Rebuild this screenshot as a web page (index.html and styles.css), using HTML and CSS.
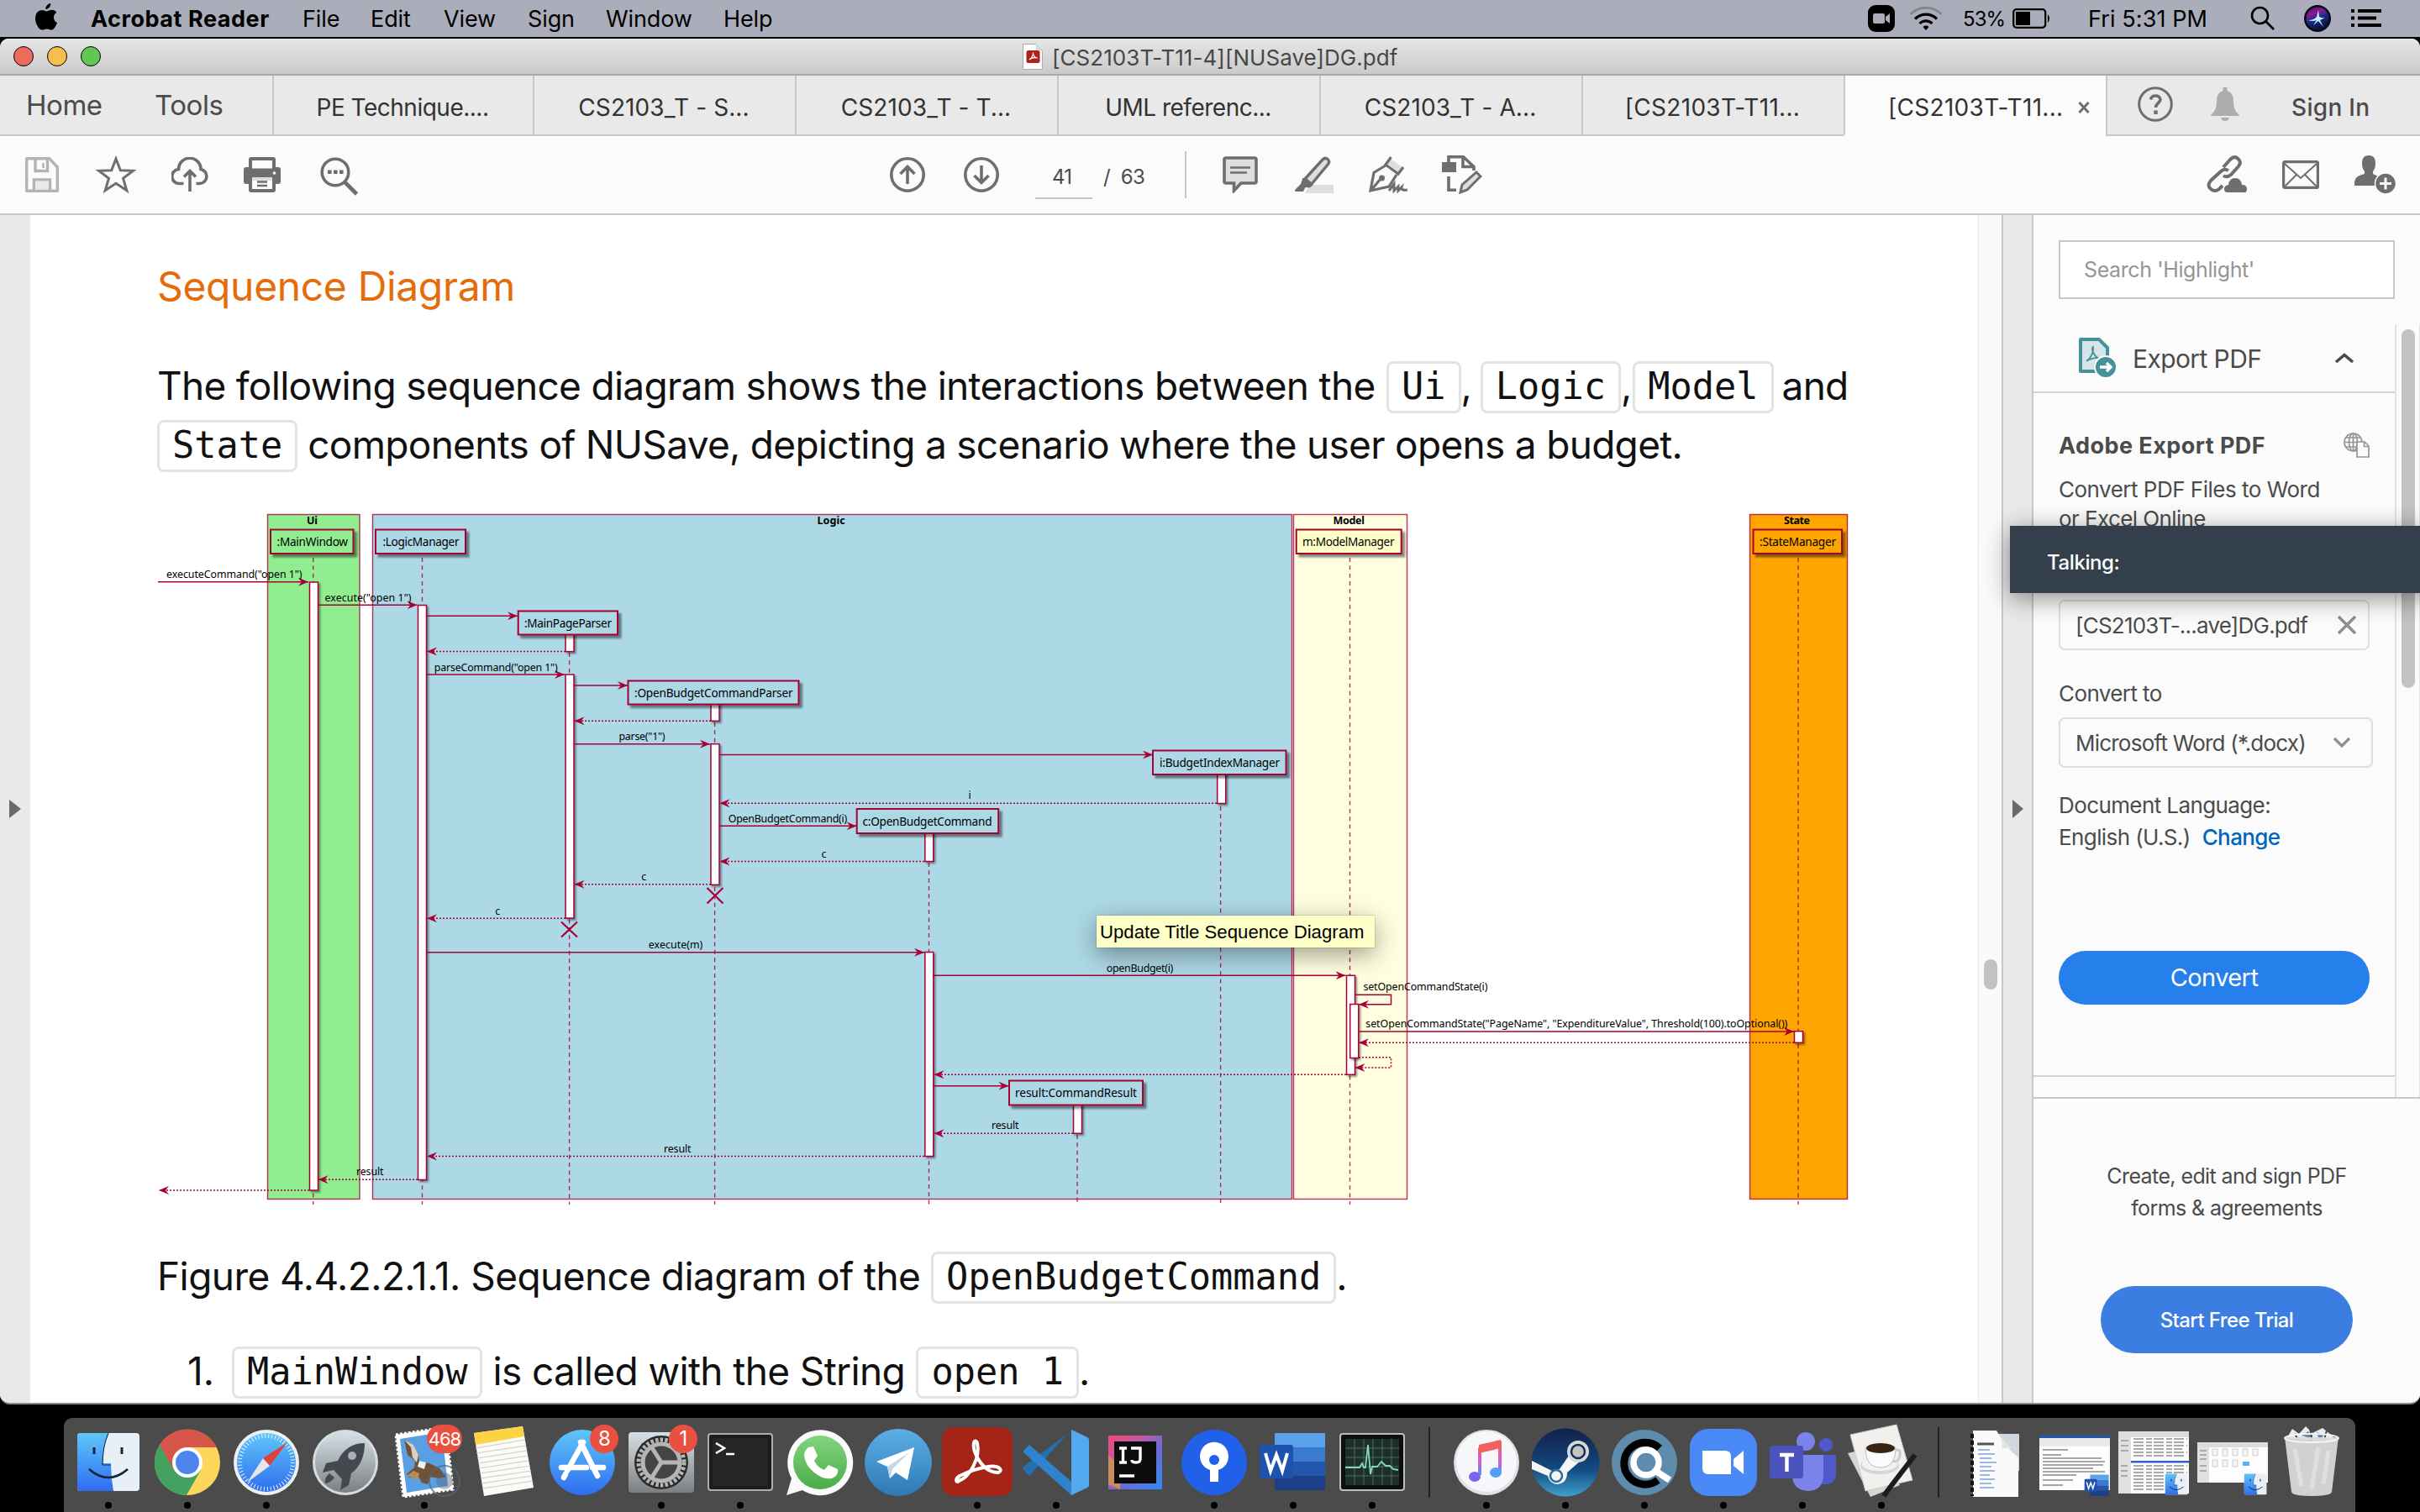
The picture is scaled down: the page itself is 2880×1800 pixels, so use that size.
FILE: index.html
```html
<!DOCTYPE html>
<html lang="en">
<head>
<meta charset="utf-8">
<title>[CS2103T-T11-4][NUSave]DG.pdf</title>
<link rel="stylesheet" href="styles.css">
</head>
<body>
<div class="desktop">
  <header class="menubar">
    <svg class="apple" width="26" height="32" viewBox="0 0 26 32"><path d="M18.3 0c.3 3.600-2.700 7-6 7C11.900 3.700 15 .4 18.300 0zM25.300 11c-5 3-4 10 .7 12-1.400 4-4 8.700-7 8.700-2 0-2.800-1.200-5.300-1.200S10.200 31.700 8.300 31.700C4.200 31.700 0 24 0 18 0 11.500 3.900 8 8 8c2.300 0 4 1.400 5.600 1.400S17 7.800 19.700 7.800c2.300 0 4.400 1.200 5.600 3.200z"/></svg>
    <b class="mi app">Acrobat Reader</b><span class="mi file">File</span><span class="mi edit">Edit</span><span class="mi view">View</span><span class="mi sign">Sign</span><span class="mi wind">Window</span><span class="mi help">Help</span>
    <div class="status">
      <svg width="32" height="32" viewBox="0 0 32 32"><rect width="32" height="32" rx="9"/><rect x="6" y="10" width="14" height="12" rx="2" fill="#abaeba"/><path d="M21 14l5-4v12l-5-4z" fill="#abaeba"/></svg>
      <svg class="wifi" width="40" height="30" viewBox="0 0 40 30" fill="none" stroke="#000" stroke-width="3.200"><path d="M1.500 10a26 26 0 0 1 37 0" stroke="#85878f"/><path d="M7 15.500a18.500 18.500 0 0 1 26 0M12.500 21a10.500 10.500 0 0 1 15 0"/><path d="M20 29l-3.500-4a5 5 0 0 1 7 0z" fill="#000" stroke="none"/></svg>
      <span class="pct">53%</span>
      <svg class="batt" width="46" height="24" viewBox="0 0 46 24"><rect x="1.200" y="1.200" width="38" height="21.600" rx="3.500" fill="none" stroke="#000" stroke-width="2.200"/><rect x="4" y="4" width="17" height="16"/><path d="M42 7q4 5 0 10z"/></svg>
      <span class="clock">Fri 5:31 PM</span>
      <svg class="srch" width="30" height="30" viewBox="0 0 30 30" fill="none" stroke="#000" stroke-width="2.600"><circle cx="11.500" cy="11.500" r="9.500"/><path d="M18.500 18.500l9.500 9.500"/></svg>
      <svg class="siri" width="32" height="32" viewBox="0 0 32 32"><defs><linearGradient id="sr" x1="0" y1="0" x2=".4" y2="1"><stop offset="0" stop-color="#3a1a5c"/><stop offset=".35" stop-color="#8d1a8f"/><stop offset=".6" stop-color="#1b2b8a"/><stop offset="1" stop-color="#0a1440"/></linearGradient></defs><circle cx="16" cy="16" r="16" fill="#07071a"/><circle cx="16" cy="16" r="13.500" fill="url(#sr)"/><path d="M5 18q7 0 10-4l2-8 1 8q4 2 7 1-4 2-6 3l4 8-6-7-6 5 4-6q-5 2-10 0z" fill="#bff3ff"/></svg>
      <svg class="list" width="36" height="22" viewBox="0 0 36 22"><path d="M0 0h4v4H0zM8 0h28v4H8zM0 8.500h4v4H0zM8 8.500h22v4H8zM0 17h4v4H0zM8 17h28v4H8z"/></svg>
    </div>
  </header>

  <section class="window">
    <div class="titlebar">
      <div class="lights"><i class="red"></i><i class="yellow"></i><i class="green"></i></div>
      <svg class="docicon" width="24" height="31" viewBox="0 0 24 31"><path d="M.5.500h15l8 8v22H.500z" fill="#fff" stroke="#aaa"/><path d="M15.500.500v8h8z" fill="#ddd"/><rect x="4.500" y="8" width="16" height="15" rx="2.500" fill="#b1211b"/><path d="M8 19c3-2 5-6 4.500-8.500M12.500 12c.5 3 3 5 5 5-3-1-7 0-9.500 2" fill="none" stroke="#fff" stroke-width="1.300"/></svg>
      <span class="wtitle">[CS2103T-T11-4][NUSave]DG.pdf</span>
    </div>

    <nav class="tabs">
      <div class="hometools"><span class="home">Home</span><span class="tools">Tools</span></div>
      <div class="tab t1">PE Technique....</div>
      <div class="tab t2">CS2103_T - S...</div>
      <div class="tab t3">CS2103_T - T...</div>
      <div class="tab t4">UML referenc...</div>
      <div class="tab t5">CS2103_T - A...</div>
      <div class="tab t6">[CS2103T-T11...</div>
      <div class="tab active"><span>[CS2103T-T11...</span><svg width="14" height="14" viewBox="0 0 14 14"><path d="M1.500 1l11 12M12.500 1l-11 12" stroke="#6e6e6e" stroke-width="3"/></svg></div>
      <div class="account">
        <svg width="42" height="42" viewBox="0 0 42 42" fill="none" stroke="#6e6e6e"><circle cx="21" cy="21" r="19.300" stroke-width="3"/><path d="M15.500 15.500q1-4.500 5.800-4.500t5.700 4.500c0 4-5.500 4.500-5.500 9.500" stroke-width="3.600"/><path d="M19.300 28.500h4.400v4.400h-4.400z" fill="#6e6e6e" stroke="none"/></svg>
        <svg class="bell" width="34" height="40" viewBox="0 0 34 40" fill="#aeaeae"><path d="M14.500 0h5v4c6 2 7.500 7 7.500 12 0 9 2 12 7 17v1H0v-1c5-5 7-8 7-17 0-5 1.500-10 7.500-12zM12 36h10q-1 4-5 4t-5-4z"/></svg>
        <span class="signin">Sign In</span>
      </div>
    </nav>

    <div class="toolbar">
      <svg class="i1" width="40" height="42" viewBox="0 0 40 42" fill="none" stroke="#b3b3b3" stroke-width="3.400"><path d="M1.700 1.700h27L38.300 12v28.300H1.700z" stroke-linejoin="round"/><path d="M12 2v14.500h14.500V2M10.500 40V27h19v13" /><path d="M12.200 28.500h15.600v10H12.200z" fill="#e9e9e9" stroke="none"/><path d="M21.500 7v6" stroke-width="2.500"/></svg>
      <svg class="i2" width="48" height="46" viewBox="0 0 48 46"><path d="M24 4l5.300 13.800 15.200.5-12 9 4.300 14.500L24 33.300 11.200 41.800l4.300-14.500-12-9 15.200-.5z" fill="none" stroke="#6e6e6e" stroke-width="3"/></svg>
      <svg class="i3" width="44" height="42" viewBox="0 0 44 42" fill="none" stroke="#6e6e6e" stroke-width="3.600"><path d="M14.500 31.500H10a8.500 8.500 0 0 1-1.500-17 13 13 0 0 1 26.500 0 8.600 8.600 0 0 1-1 17h-4.500"/><path d="M22 41V17M15 23.500l7-7 7 7"/></svg>
      <svg class="i4" width="44" height="42" viewBox="0 0 44 42"><path d="M9 0h26q3 0 3 3v9h3q3 0 3 3v14q0 3-3 3h-3v7q0 3-3 3H9q-3 0-3-3v-7H3q-3 0-3-3V15q0-3 3-3h3V3q0-3 3-3z" fill="#6e6e6e"/><path d="M10 4h24v9.500H10zM10 24h24v14H10z" fill="#fbfbfb"/><path d="M10 24h24v4H10z" fill="#ddd"/><path d="M16 29.500h12M16 34h12" stroke="#6e6e6e" stroke-width="2.400"/><circle cx="36.500" cy="19" r="1.800" fill="#fbfbfb"/></svg>
      <svg class="i5" width="46" height="46" viewBox="0 0 46 46" fill="none" stroke="#6e6e6e"><circle cx="18" cy="18" r="15.800" stroke-width="3.600"/><path d="M29.500 30l14 14" stroke-width="4.600"/><path d="M9 15.500h4.600v4.600H9zM16 15.500h4.600v4.600H16zM23 15.500h4.600v4.600H23z" fill="#6e6e6e" stroke="none"/></svg>
      <svg class="i6" width="42" height="42" viewBox="0 0 42 42" fill="none" stroke="#6e6e6e" stroke-width="3.600"><circle cx="21" cy="21" r="19.200"/><path d="M21 32V12M12.500 20l8.500-8.500 8.500 8.500"/></svg>
      <svg class="i7" width="42" height="42" viewBox="0 0 42 42" fill="none" stroke="#6e6e6e" stroke-width="3.600"><circle cx="21" cy="21" r="19.200"/><path d="M21 10v20M12.500 22l8.500 8.500 8.500-8.500"/></svg>
      <div class="pageno">41</div>
      <div class="pages"><span>/</span><span class="total">63</span></div>
      <div class="vsep"></div>
      <svg class="i8" width="42" height="44" viewBox="0 0 42 44"><path d="M4 2h34q2 0 2 2v26q0 2-2 2H22l-8.500 9v-9H4q-2 0-2-2V4q0-2 2-2z" fill="#dedede" stroke="#6e6e6e" stroke-width="3.600"/><path d="M9 13.500h24M9 19.500h20" stroke="#6e6e6e" stroke-width="2.600"/></svg>
      <svg class="i9" width="46" height="44" viewBox="0 0 46 44"><path d="M18 34h28v10H12z" fill="#dedede"/><path d="M12 27L33 4q3-3 6-.5t.5 6L20 33z" fill="#dedede" stroke="#6e6e6e" stroke-width="3.400"/><path d="M9.500 25.500l12 9-4 3-5-.5L10 42H1q-2-1 0-3l6-6z" fill="#6e6e6e"/></svg>
      <svg class="i10" width="46" height="44" viewBox="0 0 46 44" fill="none" stroke="#6e6e6e" stroke-width="3.200"><path d="M26 3l15 11-5 6-15-13z" fill="#dedede" stroke="none"/><path d="M26.500 1L20 10l15 11 6-8M20 11L6 19.500 2 41l22-5 9-14"/><path d="M3 40l11-13"/><circle cx="15.500" cy="26" r="3.500" fill="#6e6e6e" stroke="none"/><path d="M24 41l6-8v8l5-5v5l4-4q-1 4 7 3" stroke-width="3"/></svg>
      <svg class="i11" width="48" height="46" viewBox="0 0 48 46" fill="none" stroke="#6e6e6e" stroke-width="3.600"><path d="M8 8V1.800h17.500L38 13.500V18M25 2v11.500h12M8 25v16.300h9"/><path d="M0 8h17v12H0z" fill="#6e6e6e" stroke="none"/><path d="M22 44l2-9 17-15 5 5-16 16z" fill="#dedede" stroke-width="3"/></svg>
      <svg class="i12" width="48" height="46" viewBox="0 0 48 46" fill="none" stroke="#6e6e6e" stroke-width="4"><path d="M20 14L28 5q5-5 9.500-1t.5 9l-9 10q-5 4-9 1"/><path d="M26 18q-5-3-9 1L5 30q-5 6 0 10t10 0l4-4"/><path d="M25 44q-4 0-4-4t5-5q1-8 8-8t8 8q6 0 6 5t-4 4z" fill="#6e6e6e" stroke="none"/></svg>
      <svg class="i13" width="44" height="34" viewBox="0 0 44 34" fill="none" stroke="#6e6e6e"><rect x="1.600" y="1.600" width="40.800" height="30.800" rx="1.500" stroke-width="3.200"/><path d="M3 4l19 17L41 4M3 31l14-14M41 31L27 17" stroke-width="2"/></svg>
      <svg class="i14" width="50" height="46" viewBox="0 0 50 46"><path d="M17 0q8 0 8 9 0 7-3 10v3l8 4-6 10H0q-1-9 6-12l6-2v-3q-3-3-3-10 0-9 8-9z" fill="#6e6e6e"/><circle cx="37" cy="33.500" r="12.500" fill="#6e6e6e" stroke="#fbfbfb" stroke-width="1.500"/><path d="M37 26.500v14M30 33.500h14" stroke="#fbfbfb" stroke-width="3"/></svg>
    </div>

    <div class="body">
      <aside class="leftgutter"><svg width="14" height="22" viewBox="0 0 14 22"><path d="M0 0l14 11L0 22z" fill="#6a6a6a"/></svg></aside>
      <main class="page">
        <h1>Sequence Diagram</h1>
        <p class="para"><span class="l1">The following sequence diagram shows the interactions between the</span><code class="c1">Ui</code>,<code class="c2">Logic</code>,<code class="c3">Model</code><span class="l2">and</span><br><code class="c4">State</code><span class="l3">components of NUSave, depicting a scenario where the user opens a budget.</span></p>
        <div class="figure">
          <svg class="diagram" width="2020" height="840" viewBox="189 600 2020 840">
            <defs>
              <marker id="ah" markerUnits="userSpaceOnUse" markerWidth="13" markerHeight="12" refX="12" refY="5" orient="auto"><path d="M0 0l12 5-12 5 4-5z" fill="#a80036"/></marker>
              <filter id="sh" x="-10%" y="-20%" width="125%" height="160%"><feDropShadow dx="3.500" dy="3.500" stdDeviation="1.300" flood-color="#000" flood-opacity=".45"/></filter>
            </defs>
            <g stroke="#a80036" stroke-opacity=".8" stroke-width="1.400">
              <rect x="318.500" y="612.500" width="109.500" height="815" fill="#90ee90"/>
              <rect x="443.500" y="612.500" width="1094" height="815" fill="#add8e6"/>
              <rect x="1539.500" y="612.500" width="135" height="815" fill="#ffffe0"/>
              <rect x="2082.500" y="612.500" width="116" height="815" fill="#ffa500"/>
            </g>
            <g class="life">
              <path d="M372.700 664V1434M502.500 664V1434M677.600 777V1434M850.600 860V1434M1105.500 1027V1434M1282 1351V1434M1452.600 960V1434M1606.500 664V1434M2140 664V1434"/>
            </g>
            <g class="act">
              <rect x="368.500" y="693" width="10" height="724"/>
              <rect x="497.500" y="720.500" width="10" height="684"/>
              <rect x="673" y="750" width="10" height="25.700"/>
              <rect x="673" y="803" width="10" height="290"/>
              <rect x="846" y="830" width="10" height="28.300"/>
              <rect x="846" y="885.700" width="10" height="167.600"/>
              <rect x="1448.700" y="915" width="10" height="41.500"/>
              <rect x="1100.800" y="985" width="10" height="40.500"/>
              <rect x="1100.800" y="1133.500" width="10" height="243"/>
              <rect x="1277.500" y="1310" width="10" height="39.300"/>
              <rect x="1602.500" y="1161.300" width="10" height="118"/>
              <rect x="1606.700" y="1195.500" width="10" height="64"/>
              <rect x="2135.500" y="1227.700" width="10" height="13.600"/>
            </g>
            <g class="part" filter="url(#sh)">
              <rect x="322" y="630.500" width="98.500" height="28.500" fill="#90ee90"/>
              <rect x="447" y="630.500" width="107" height="28.500" fill="#add8e6"/>
              <rect x="616.700" y="727.500" width="118.300" height="28" fill="#add8e6"/>
              <rect x="747.500" y="810.500" width="203" height="28" fill="#add8e6"/>
              <rect x="1542.700" y="630.500" width="125" height="28.500" fill="#ffffc8"/>
              <rect x="1372" y="893.500" width="158.500" height="28.500" fill="#add8e6"/>
              <rect x="1019.700" y="963" width="168.500" height="29" fill="#add8e6"/>
              <rect x="1201" y="1286.500" width="159" height="29" fill="#add8e6"/>
              <rect x="2086.500" y="630.500" width="105.500" height="28.500" fill="#ffa500"/>
            </g>
            <g class="msg">
              <path d="M188 692.700H367"/><path d="M379 720.300H496.500"/><path d="M508 733.300H616"/><path d="M508 803H672"/><path d="M683 816H747"/><path d="M683 885.700H845"/><path d="M856 898.500H1372"/><path d="M856 983.300H1019.500"/><path d="M508 1133.700H1100"/><path d="M1111 1161.300H1601.500"/><path d="M1613 1184.300H1655.500V1195.700H1617"/><path d="M1617 1228H2135"/><path d="M1111 1292.700H1200.500"/>
            </g>
            <g class="msg ret">
              <path d="M673 775.500H508"/><path d="M846 858.300H683.500"/><path d="M1448 956.300H856.500"/><path d="M1100 1025.500H856.500"/><path d="M846 1052.800H683.500"/><path d="M673 1093.200H508"/><path d="M2135 1241.300H1617"/><path d="M1617 1258.700H1655.500V1271H1612.500"/><path d="M1602 1279.300H1111.500"/><path d="M1277 1349.300H1111.500"/><path d="M1100 1376.500H508"/><path d="M497 1404.200H378.500"/><path d="M368 1417H189"/>
            </g>
            <path d="M841.500 1057l19 18.500M860.500 1057l-19 18.500M668 1097.500l19 18M687 1097.500l-19 18" stroke="#a80036" stroke-width="2.200"/>
            <g class="grp">
              <text x="365" y="624.300" textLength="13">Ui</text><text x="972.600" y="624.300" textLength="33">Logic</text><text x="1586.500" y="624.300" textLength="37.500">Model</text><text x="2123" y="624.300" textLength="31">State</text>
            </g>
            <g class="pt">
              <text x="329.500" y="650" textLength="84.500">:MainWindow</text><text x="455.500" y="650" textLength="91">:LogicManager</text><text x="624" y="747" textLength="104">:MainPageParser</text><text x="755" y="830" textLength="188.500">:OpenBudgetCommandParser</text><text x="1550" y="650" textLength="109.500">m:ModelManager</text><text x="1380" y="913" textLength="143">i:BudgetIndexManager</text><text x="1026.500" y="982.700" textLength="154">c:OpenBudgetCommand</text><text x="1208" y="1306" textLength="145">result:CommandResult</text><text x="2094" y="650" textLength="91">:StateManager</text>
            </g>
            <g class="mt">
              <text x="198" y="688" textLength="161.500">executeCommand("open 1")</text><text x="386.500" y="715.700" textLength="103">execute("open 1")</text><text x="516.700" y="798.700" textLength="147">parseCommand("open 1")</text><text x="736.500" y="881.300" textLength="55">parse("1")</text><text x="1152.400" y="951">i</text><text x="866.700" y="978.700" textLength="141.500">OpenBudgetCommand(i)</text><text x="977.500" y="1021">c</text><text x="763.200" y="1048.300">c</text><text x="589.200" y="1089">c</text><text x="771.800" y="1129" textLength="64.500">execute(m)</text><text x="1316.800" y="1156.700" textLength="79.500">openBudget(i)</text><text x="1622.400" y="1179" textLength="148">setOpenCommandState(i)</text><text x="1625.300" y="1223.300" textLength="502">setOpenCommandState("PageName", "ExpenditureValue", Threshold(100).toOptional())</text><text x="1180" y="1344" textLength="32.500">result</text><text x="790" y="1371.700" textLength="32.500">result</text><text x="424" y="1399" textLength="32.500">result</text>
            </g>
          </svg>
          <div class="tooltip">Update Title Sequence Diagram</div>
        </div>
        <p class="caption"><span class="l4">Figure 4.4.2.2.1.1. Sequence diagram of the</span><code class="c5">OpenBudgetCommand</code>.</p>
        <p class="item"><span class="num">1.</span><code class="c6">MainWindow</code><span class="l5">is called with the String</span><code class="c7">open 1</code>.</p>
      </main>
      <div class="vscroll"><i></i></div>
      <div class="collapse"><svg width="14" height="22" viewBox="0 0 14 22"><path d="M0 0l13 11L0 22z" fill="#6a6a6a"/></svg></div>
      <aside class="side">
        <div class="search">Search 'Highlight'</div>
        <div class="sidemain">
          <div class="sidecol">
            <div class="exphead">
              <svg width="46" height="48" viewBox="0 0 46 48"><path d="M2 2h22l10 10v28H2z" fill="#d5e5e7" stroke="#45929a" stroke-width="4" stroke-linejoin="round"/><path d="M9 28c6-4 9-12 8-17-3 2 2 14 9 14-6-2-12 0-17 3z" fill="none" stroke="#45929a" stroke-width="1.800"/><circle cx="32" cy="35" r="13" fill="#45929a" stroke="#fafafa" stroke-width="2"/><path d="M25 35h12M33 30l5 5-5 5" stroke="#fff" stroke-width="3.400" fill="none"/></svg>
              <span>Export PDF</span>
              <svg class="chev" width="24" height="13" viewBox="0 0 24 13"><path d="M2 11L12 2.500 22 11" fill="none" stroke="#4b4b4b" stroke-width="3.600"/></svg>
            </div>
            <div class="exptitle"><b>Adobe Export PDF</b><svg width="31" height="30" viewBox="0 0 31 30" fill="none" stroke="#959595" stroke-width="1.700"><circle cx="11.500" cy="11.500" r="10.500"/><ellipse cx="11.500" cy="11.500" rx="5" ry="10.500"/><path d="M11.500 1v21M1 11.500h21M3 6h17M3 17h17"/><path d="M16 11h9l5 5v13H16z" fill="#fbfbfb"/><path d="M24.500 11v5.500H30"/></svg></div>
            <div class="expdesc"><span class="d1">Convert PDF Files to Word</span><br><span class="d2">or Excel Online</span></div>
            <div class="filebox"><span>[CS2103T-...ave]DG.pdf</span><svg width="24" height="24" viewBox="0 0 24 24"><path d="M2 2l20 20M22 2L2 22" stroke="#8e8e8e" stroke-width="3.400"/></svg></div>
            <div class="convlabel">Convert to</div>
            <div class="select"><span>Microsoft Word (*.docx)</span><svg width="22" height="14" viewBox="0 0 22 14"><path d="M2 2l9 9 9-9" fill="none" stroke="#8e8e8e" stroke-width="3.200"/></svg></div>
            <div class="lang"><span class="d3">Document Language:</span><br><span class="d4">English (U.S.)</span><a>Change</a></div>
            <div class="convert">Convert</div>
            <div class="sideline"></div>
          </div>
          <div class="sscroll"><i></i></div>
        </div>
        <div class="promo">
          <span class="d5">Create, edit and sign PDF</span><span class="d6">forms &amp; agreements</span>
          <div class="trial">Start Free Trial</div>
        </div>
      </aside>
    </div>
    <div class="talking">Talking:</div>
  </section>

  <footer class="dock">
    <svg width="0" height="0" class="defs"><defs>
      <linearGradient id="gb" x1="0" y1="0" x2="0" y2="1"><stop offset="0" stop-color="#5fc6f8"/><stop offset="1" stop-color="#2f6df0"/></linearGradient>
      <linearGradient id="gr" x1="0" y1="0" x2="0" y2="1"><stop offset="0" stop-color="#d5e0e6"/><stop offset="1" stop-color="#7b7f82"/></linearGradient>
      <linearGradient id="gt" x1="0" y1="0" x2="0" y2="1"><stop offset="0" stop-color="#5bb0e6"/><stop offset="1" stop-color="#2f78b5"/></linearGradient>
      <linearGradient id="gg" x1="0" y1="0" x2="0" y2="1"><stop offset="0" stop-color="#82d57d"/><stop offset="1" stop-color="#4cab49"/></linearGradient>
      <linearGradient id="gs" x1="0" y1="0" x2="0" y2="1"><stop offset="0" stop-color="#12214a"/><stop offset=".6" stop-color="#124a80"/><stop offset="1" stop-color="#3fa0cc"/></linearGradient>
      <linearGradient id="gm" x1="0" y1="0" x2="0" y2="1"><stop offset="0" stop-color="#f5635e"/><stop offset=".5" stop-color="#d95bd0"/><stop offset="1" stop-color="#5b8dfa"/></linearGradient>
      <linearGradient id="gi" x1="0" y1="0" x2="1" y2="1"><stop offset="0" stop-color="#f5487a"/><stop offset=".3" stop-color="#c35a9c"/><stop offset=".6" stop-color="#6b6bd6"/><stop offset="1" stop-color="#2d8bf5"/></linearGradient>
      <g id="finder"><rect x="5" y="7" width="74" height="69" rx="4" fill="#e9eff7"/><path d="M9 7h33q-7 16-7 36h10q0 17 3 33H9q-4 0-4-4V11q0-4 4-4z" fill="url(#gb)"/><path d="M42 7q-7 16-7 38h10" fill="none" stroke="#1a3550" stroke-width="1.200"/><path d="M25 24v8M58 24v8" stroke="#12253c" stroke-width="3"/><path d="M19 50q23 20 46 0" fill="none" stroke="#12253c" stroke-width="2.600"/></g>
      <g id="word"><rect x="20" y="7" width="60" height="17" fill="#5aa3ec"/><rect x="20" y="24" width="60" height="17" fill="#3a7bd0"/><rect x="20" y="41" width="60" height="17" fill="#2456ae"/><path d="M20 58h60v14q0 3-3 3H23q-3 0-3-3z" fill="#1d3f88"/><rect x="2" y="21" width="40" height="40" rx="3" fill="#1f52ad"/><path d="M9 31l6 21 7-19 7 19 6-21" fill="none" stroke="#fff" stroke-width="4"/></g>
    </defs></svg>
    <div class="di on"><svg viewBox="0 0 84 84"><use href="#finder"/></svg></div>
    <div class="di on"><svg viewBox="0 0 84 84"><circle cx="42" cy="42" r="39" fill="#ffd65c"/><path d="M42 42L9 21A39 39 0 0 0 41 81l17-30z" fill="#45a160"/><path d="M42 24h35A39 39 0 0 0 9 21l17 30z" fill="#d6574a"/><circle cx="42" cy="42" r="18" fill="#fff"/><circle cx="42" cy="42" r="14" fill="#4e85ec"/></svg></div>
    <div class="di on"><svg viewBox="0 0 84 84"><circle cx="42" cy="42" r="39" fill="#eef0f2"/><circle cx="42" cy="42" r="35" fill="url(#gb)"/><circle cx="42" cy="42" r="31.500" fill="none" stroke="#e8f6ff" stroke-width="5" stroke-dasharray="1 2.960"/><path d="M67 18L38 37l8 9z" fill="#e04238"/><path d="M19 66l19-29 8 9z" fill="#e6e6e6"/></svg></div>
    <div class="di"><svg viewBox="0 0 84 84"><circle cx="42" cy="42" r="39" fill="#d5dde2"/><circle cx="42" cy="42" r="36" fill="url(#gr)"/><path d="M65 19q-22 0-32 21l-14 3-4 11 13-3 10 11-2 13 10-6 3-14q16-12 16-36z" fill="#43494e"/><path d="M23 55q-6 5-5 12 7-1 11-7z" fill="#43494e"/><circle cx="50" cy="34" r="5" fill="#a8b0b5"/></svg></div>
    <div class="di on"><svg viewBox="0 0 84 84"><path d="M8 9l60-9 8 74-59 9z" fill="#fff" stroke="#fff" stroke-width="3" stroke-dasharray="3 2"/><path d="M13 14l50-8 7 64-49 8z" fill="#5a9fe2"/><path d="M18 15l11 6 6 12 1 8 12 2 12 6 8 10-8 2-11-2-3 9-7-2-5-9-10 3-3-4 9-8 1-8-9-7z" fill="#6f5338"/><path d="M18 15l8 9 2 12 5 6 2-9-6-12z" fill="#d9cfc2"/><path d="M36 40l8 2-2 8-8-3z" fill="#f1f1f1"/><path d="M21 58l8-6 7 3-2 9-5-4z" fill="#b98c55"/><circle cx="66" cy="64" r="18" fill="none" stroke="#56657a" stroke-opacity=".7" stroke-width="2"/><circle cx="66" cy="64" r="10" fill="#56657a" fill-opacity=".45"/></svg><em class="w3">468</em></div>
    <div class="di"><svg viewBox="0 0 84 84"><path d="M7 7l58-8 13 73-59 10z" fill="#fbfbf8"/><path d="M7 7l58-8 2 12-58 10z" fill="#fbd343"/><path d="M9 25l59-10M10 31l59-9M11 37l59-9M12 43l59-9M13 49l59-9M14 55l60-9M15 61l60-9M16 67l60-9M17 73l60-9" stroke="#ccc" stroke-width="1.200"/></svg></div>
    <div class="di"><svg viewBox="0 0 84 84"><circle cx="42" cy="42" r="39" fill="url(#gb)"/><path d="M40 18l20 40M43 18L24 52M17 48h30M54 48h13M22 56l-2 4" fill="none" stroke="#fff" stroke-width="6.500" stroke-linecap="round"/></svg><em>8</em></div>
    <div class="di on"><svg viewBox="0 0 84 84"><rect x="3" y="6" width="78" height="72" rx="4" fill="url(#gr)"/><circle cx="42" cy="42" r="32" fill="#2b2b2b"/><circle cx="42" cy="42" r="27" fill="none" stroke="#b5b5b5" stroke-width="5" stroke-dasharray="3.500 2.200"/><circle cx="42" cy="42" r="22" fill="#444" stroke="#b5b5b5" stroke-width="5"/><path d="M42 42h22M42 42L30 23M42 42L30 61" stroke="#b5b5b5" stroke-width="5"/></svg><em>1</em></div>
    <div class="di on"><svg viewBox="0 0 84 84"><rect x="4" y="8" width="76" height="67" rx="3" fill="#1d1d1d" stroke="#a9b0ae" stroke-width="2"/><rect x="9" y="13" width="66" height="57" fill="#262626"/><path d="M13 19l10 6-10 6M25 32h10" stroke="#fff" stroke-width="2.600" fill="none"/></svg></div>
    <div class="di"><svg viewBox="0 0 84 84"><path d="M3 81l6-20A39 39 0 1 1 22 75z" fill="#fafafa"/><circle cx="43" cy="42" r="32" fill="url(#gg)"/><path d="M29 24l6-1 5 11-4 6q4 8 12 11l5-6 11 5q1 8-7 11-10 2-21-7T24 34q0-6 5-10z" fill="#fff"/></svg></div>
    <div class="di"><svg viewBox="0 0 84 84"><circle cx="42" cy="42" r="40" fill="url(#gt)"/><path d="M16 41l45-17-8 39-14-9-7 7-3-14z" fill="#fff"/><path d="M29 47l26-17-20 20-3 11z" fill="#c5d8e6"/></svg></div>
    <div class="di on"><svg viewBox="0 0 84 84"><rect y="0" width="84" height="82" rx="14" fill="#a42418"/><path d="M20 64c12-4 26-26 22-45-3-7-8 2 0 17 6 11 15 18 25 18 6-2 2-9-12-7-13 2-24 6-34 11-6 4-4 9-1 6z" fill="none" stroke="#fff" stroke-width="4"/></svg></div>
    <div class="di on"><svg viewBox="0 0 84 84"><path d="M60 3l-50 55-7-7q-1-2 0-4L58 6z" fill="#2370b0"/><path d="M60 81L4 31q-2-2 0-4l6-6 50 44z" fill="#2f83cd"/><path d="M60 3l19 9q2 1 2 3v54q0 2-2 3l-19 9z" fill="#52a9f0"/><path d="M60 24v36L38 42z" fill="#4b4b4b"/></svg></div>
    <div class="di"><svg viewBox="0 0 84 84"><path d="M10 10h64v64H10z" fill="url(#gi)"/><path d="M10 34v34l14 6V45z" fill="#c98d5a"/><path d="M17 17h50v50H17z" fill="#0c0c0c"/><path d="M23 25h9M27.500 25v17M23 42h9M37 25h11v13q0 4-5 4t-5-3M23 58h18" fill="none" stroke="#fff" stroke-width="3.400"/></svg></div>
    <div class="di on"><svg viewBox="0 0 84 84"><circle cx="42" cy="42" r="39" fill="#2160e8"/><path d="M37 65V51a17 17 0 1 1 10 0v14z" fill="#fff"/><circle cx="42" cy="39" r="6" fill="#2160e8"/></svg></div>
    <div class="di on"><svg viewBox="0 0 84 84"><use href="#word"/></svg></div>
    <div class="di on"><svg viewBox="0 0 84 84"><rect x="4" y="8" width="76" height="67" rx="3" fill="#0c0f0e" stroke="#b9bfbd" stroke-width="2"/><rect x="10" y="14" width="64" height="55" fill="#1c2f29"/><path d="M10 25h64M10 36h64M10 47h64M10 58h64M21 14v55M32 14v55M43 14v55M54 14v55M65 14v55" stroke="#4c6b60" stroke-width="1"/><path d="M10 48h17l3-5 2 5h2l3-27 3 35 2-9h6l5-6 5 5 5 0 4 4 6 1" fill="none" stroke="#86d8bd" stroke-width="1.800"/></svg></div>
    <div class="dsep"></div>
    <div class="di on"><svg viewBox="0 0 84 84"><circle cx="42" cy="42" r="39" fill="#dfe2e8"/><circle cx="42" cy="41" r="36" fill="#f7f7fa"/><path d="M34 57V26l24-7v33" fill="none" stroke="url(#gm)" stroke-width="4"/><path d="M33 21l26-6v10l-26 6z" fill="#f0605f"/><ellipse cx="28" cy="59" rx="7" ry="6" fill="#7d62ee"/><ellipse cx="53" cy="54" rx="7" ry="6" fill="#4fa0f5"/></svg></div>
    <div class="di on"><svg viewBox="0 0 84 84"><circle cx="42" cy="42" r="40.500" fill="url(#gs)"/><path d="M2 40l24 12 9-2 13-19 12 9-16 14q0 13-12 14-9-1-11-10L2 50z" fill="#f5f5f5"/><circle cx="57" cy="29" r="13" fill="#d8d8d8"/><circle cx="57" cy="29" r="8" fill="#c4c4c4" stroke="#12305a" stroke-width="2.500"/><circle cx="31" cy="58" r="7" fill="none" stroke="#2b6a9a" stroke-width="2.500"/></svg></div>
    <div class="di on"><svg viewBox="0 0 84 84"><circle cx="42" cy="42" r="39" fill="#5d8cac"/><path d="M60 25A25 25 0 1 0 58 63" fill="none" stroke="#000" stroke-width="9"/><circle cx="44" cy="42" r="15" fill="none" stroke="#fff" stroke-width="7.500"/><path d="M52 50l20 13" stroke="#fff" stroke-width="8"/></svg></div>
    <div class="di on"><svg viewBox="0 0 84 84"><rect x="2" y="2" width="80" height="80" rx="22" fill="#4a8af7"/><path d="M17 28h27q7 0 7 7v21H24q-7 0-7-7zM54 38l12-10v28L54 46z" fill="#fff"/></svg></div>
    <div class="di on"><svg viewBox="0 0 84 84"><circle cx="46" cy="17" r="11" fill="#7b83eb"/><circle cx="70" cy="21" r="8" fill="#5059c9"/><path d="M58 33h24v23q0 10-10 12h-14z" fill="#5059c9"/><path d="M30 33h37v24q0 18-18 19-19-1-19-19z" fill="#7b83eb"/><rect x="3" y="22" width="40" height="39" rx="3" fill="#4b53bc"/><path d="M15 33h17M23.500 33v20" stroke="#fff" stroke-width="4.400"/></svg></div>
    <div class="di on"><svg viewBox="0 0 84 84"><path d="M2 31l40-10 22 48-35 14z" fill="#d6d6d6"/><path d="M5 9L60-3l19 66-56 13z" fill="#f1f0ec" stroke="#ccc"/><ellipse cx="40" cy="46" rx="23" ry="10" fill="#d6d6d6"/><ellipse cx="40" cy="44" rx="21" ry="8" fill="#f2f2f2"/><path d="M23 24h36q0 24-18 24T23 24z" fill="#fbfbfb" stroke="#bbb"/><path d="M58 28q8-3 6 6t-9 6" fill="none" stroke="#ccc" stroke-width="3"/><ellipse cx="41" cy="25" rx="17" ry="6" fill="#3a2412"/><path d="M82 33L49 76l-4 6" stroke="#1c1c1c" stroke-width="6"/></svg></div>
    <div class="dsep"></div>
    <div class="di"><svg viewBox="0 0 84 84"><path d="M20 8h50v44H20z" fill="#cfd6dd"/><path d="M15 4h28q12 22 26 32v47H15z" fill="#fafafa"/><path d="M15 4h32q4 10 2 22 4-2 12-1Q48 14 47 4z" fill="#e3e3e3"/><path d="M14 8v74" stroke="#111" stroke-width="4" stroke-dasharray="5 3"/><path d="M20 20h20" stroke="#555" stroke-width="3"/><path d="M21 27h14M21 32h20M23 37h14M23 42h20M23 47h14M23 52h18M23 57h12M23 62h18M23 67h14M23 72h17" stroke="#9db9e3" stroke-width="2"/></svg></div>
    <div class="di"><svg viewBox="0 0 84 84"><path d="M0 9h84v66H0z" fill="#fdfdfd"/><path d="M0 9h84v4H0z" fill="#2b579a"/><path d="M0 13h84v10H0z" fill="#e9e9e9"/><path d="M4 27h30M4 33h22M4 37h70M4 41h74M4 45h72M4 49h60M4 53h74M4 57h40M4 63h36M4 69h24" stroke="#8a8a8a" stroke-width="1.400"/><use href="#word" transform="translate(53 54) scale(.37)"/></svg></div>
    <div class="di"><svg viewBox="0 0 84 84"><path d="M0 5h84v74H0z" fill="#fdfdfd"/><path d="M0 5h84v7H0z" fill="#dcdcdc"/><path d="M0 12h15v67H0z" fill="#e2e0e0"/><path d="M18 14h64M18 18h60M18 22h64M18 26h58M18 30h64M18 34h60M18 46h64M18 50h60M18 54h64M18 58h56M18 62h62M18 66h60M18 70h64M18 74h60" stroke="#a9a9a9" stroke-width="1.800" stroke-dasharray="12 3 7 2"/><path d="M15 40h69v2.500H15z" fill="#2a63d8"/><path d="M3 16h9M3 22h9M3 28h9M3 46h8M3 52h8M3 58h8" stroke="#999" stroke-width="1.500"/><use href="#finder" transform="translate(54 53) scale(.36)"/></svg></div>
    <div class="di"><svg viewBox="0 0 84 84"><path d="M0 18h84v48H0z" fill="#fdfdfd"/><path d="M0 18h84v6H0z" fill="#dcdcdc"/><path d="M0 24h14v42H0z" fill="#e2e0e0"/><path d="M3 28h8M3 33h8M3 38h8M3 46h8M3 52h8" stroke="#999" stroke-width="1.500"/><path d="M18 26h6v8h-6zM30 26h6v8h-6zM42 26h6v8h-6zM54 26h6v8h-6zM66 26h6v8h-6zM18 39h6v8h-6zM30 39h6v8h-6zM42 39h6v8h-6z" fill="#f4f4f4" stroke="#bbb" stroke-width=".7"/><path d="M54 41h8v5h-8z" fill="#5bb3ea"/><use href="#finder" transform="translate(54 53) scale(.36)"/></svg></div>
    <div class="di"><svg viewBox="0 0 84 84"><path d="M12 14l7-12 8 6 8-9 8 8 12-6 10 8 8 8z" fill="#e9e9e9"/><path d="M30 10l8-5 6 9zM48 6l8 3-4 9z" fill="#5d86a8"/><path d="M22 8l6 10M40 2l3 14M60 4l-4 14" stroke="#444" stroke-width="2"/><path d="M10 12h64l-8 65q-1 5-24 5t-24-5z" fill="#dcdcdc" fill-opacity=".93"/><ellipse cx="42" cy="13" rx="32" ry="5" fill="none" stroke="#f5f5f5" stroke-width="2"/><path d="M22 26l8 44M50 24l-8 50M62 28l-6 40" stroke="#e9e9e9" stroke-width="5" opacity=".6"/></svg></div>
  </footer>
</div>
</body>
</html>
```
FILE: styles.css
```css
* { box-sizing: border-box; margin: 0; padding: 0; }
body { width: 2880px; height: 1800px; overflow: hidden; background: #000; font-family: Inter, "Liberation Sans", sans-serif; }
svg { display: block; flex: none; }
span, a, b { white-space: nowrap; }
.desktop { width: 2880px; height: 1800px; display: flex; flex-direction: column; background: #000; }

/* menu bar */
.menubar { height: 44px; flex: none; background: #abaeba; display: flex; align-items: center; padding: 0 46px 0 42px; font-size: 27px; color: #000; }
.apple { margin-top: -4px; }
.mi { margin-top: 1px; letter-spacing: -0.100px; }
.app { width: 252px; margin-left: 40px; letter-spacing: 0.550px; }
.file { width: 81px; } .edit { width: 87px; } .view { width: 100px; } .sign { width: 93px; } .wind { width: 140px; }
.status { margin-left: auto; display: flex; align-items: center; }
.wifi { margin-left: 17px; }
.pct { width: 59px; margin-left: 24px; font-size: 24px; letter-spacing: -0.900px; }
.clock { width: 193px; margin-left: 44px; letter-spacing: 0.100px; }
.siri { margin-left: 34px; }
.list { margin-left: 24px; }

/* window */
.window { position: relative; width: 2880px; height: 1626px; margin-top: 2px; flex: none; display: flex; flex-direction: column; border-radius: 10px 10px 12px 12px; overflow: hidden; background: #fbfbfb; border-bottom: 2px solid #8a8a8a; }
.titlebar { height: 44px; flex: none; background: linear-gradient(#e6e6e6, #cacaca); border-bottom: 2px solid #a8a8a8; display: flex; align-items: center; padding-left: 16px; }
.lights { display: flex; gap: 16px; width: 1201px; }
.lights i { width: 24px; height: 24px; border-radius: 50%; border: 1px solid; }
.red { background: #ee6a5f; border-color: #d9544a; }
.yellow { background: #f5bf4f; border-color: #dba43b; }
.green { background: #62c655; border-color: #50a944; }
.wtitle { margin: 3px 0 0 11px; font-size: 26px; letter-spacing: 0.050px; color: #474747; }

.tabs { height: 72px; flex: none; display: flex; color: #323232; font-size: 28px; background: #e9e9e9; }
.hometools, .tab, .account { border-bottom: 2px solid #c8c8c8; display: flex; align-items: center; }
.hometools { width: 324px; padding-left: 31px; font-size: 33px; color: #4b4b4b; letter-spacing: -0.450px; }
.home { width: 153px; }
.tab { width: 312px; border-left: 2px solid #c8c8c8; justify-content: center; padding-top: 6px; letter-spacing: 0.100px; white-space: nowrap; padding-right: 2px; }
.t1 { width: 310px; }
.t1, .t4 { letter-spacing: -0.500px; }
.t6, .tab.active { letter-spacing: 0.300px; }
.tab.active { background: #fbfbfb; border-bottom-color: #fbfbfb; justify-content: flex-start; padding-left: 51px; }
.tab.active span { width: 226px; }
.account { flex: 1; border-left: 2px solid #c8c8c8; padding-left: 36px; color: #4b4b4b; }
.account > svg { margin-top: -2px; }
.bell { margin-left: 45px; }
.signin { margin: 6px 0 0 62px; font-weight: 500; letter-spacing: 0.300px; }

.toolbar { height: 94px; flex: none; display: flex; align-items: center; border-bottom: 2px solid #c8c8c8; padding-left: 30px; color: #4b4b4b; font-size: 25px; }
.i2 { margin-left: 44px; } .i3 { margin-left: 42px; } .i4 { margin-left: 42px; } .i5 { margin-left: 47px; margin-top: 4px; }
.i6 { margin-left: 632px; } .i7 { margin-left: 46px; }
.pageno { width: 68px; height: 58px; margin: 17px 0 0 43px; padding: 17px 0 0 20px; border-bottom: 2px solid #c4c4c4; font-size: 24px; letter-spacing: -0.800px; align-self: flex-start; }
.pages { display: flex; width: 110px; padding-left: 13px; margin-top: 5px; font-size: 24px; letter-spacing: -0.800px; }
.total { margin-left: 13px; }
.vsep { width: 2px; height: 56px; background: #c8c8c8; }
.i8 { margin-left: 43px; } .i9 { margin-left: 44px; } .i10 { margin-left: 42px; } .i11 { margin-left: 41px; }
.i12 { margin-left: 862px; } .i13 { margin-left: 42px; } .i14 { margin-left: 42px; }

.body { flex: 1; display: flex; min-height: 0; }
.leftgutter { width: 36px; background: #e9e9e9; padding: 696px 0 0 11px; }
.page { width: 2318px; background: #fff; padding: 50px 0 0 151px; color: #111; font-size: 46px; line-height: 70px; overflow: hidden; }
h1 { font-size: 48px; font-weight: 400; color: #e46c0a; line-height: 70px; letter-spacing: -0.350px; }
.para { height: 140px; margin-top: 48px; white-space: nowrap; }
code { display: inline-block; height: 62px; line-height: 54px; padding: 0 15px; border: 3px solid #e3e3e3; border-radius: 8px; font-family: "DejaVu Sans Mono", monospace; font-size: 43.600px; vertical-align: middle; margin-top: -4px; }
.l1, .l3, .l4, .l5 { display: inline-block; letter-spacing: -0.700px; }
.l1 { width: 1463px; }
.c2 { margin-left: 10px; } .c3 { margin-left: 1px; } .l2 { margin-left: 10px; letter-spacing: -0.700px; } .l3 { margin-left: 12px; }
.figure { position: relative; margin: 36px 0 0 2px; height: 840px; }
.diagram { overflow: visible; }
.life { fill: none; stroke: #a80036; stroke-opacity: .8; stroke-width: 1.400; stroke-dasharray: 5 4.340; }
.act rect { fill: #fff; stroke: #a80036; stroke-width: 1.500; filter: drop-shadow(2px 2px 1px rgba(0,0,0,.4)); }
.part { stroke: #a80036; stroke-width: 2; }
.msg { fill: none; stroke: #a80036; stroke-width: 1.500; }
.ret { stroke-dasharray: 2 2; }
.msg path { marker-end: url(#ah); }
.diagram text { font-family: "Noto Sans", sans-serif; fill: #000; }
.grp { font-size: 12.500px; font-weight: 700; }
.pt { font-size: 13.600px; }
.mt { font-size: 12.400px; }
.tooltip { position: absolute; left: 1116px; top: 490px; width: 331px; height: 38px; background: #ffffc8; color: #000; font: 22.200px/39px "Liberation Sans", sans-serif; padding-left: 4px; white-space: nowrap; box-shadow: 0 0 1px rgba(0,0,0,.6), 0 8px 30px rgba(0,0,0,.4); }
.caption { margin-top: 44px; height: 70px; }
.l4 { width: 921px; letter-spacing: -0.560px; }
.item { margin-top: 43px; height: 70px; padding-left: 36px; }
.num { display: inline-block; width: 53px; }
.l5 { margin-left: 12px; width: 504px; letter-spacing: -0.620px; }

.vscroll { width: 28px; background: #fafafa; border-left: 1px solid #e8e8e8; padding: 886px 0 0 6px; }
.vscroll i { display: block; width: 16px; height: 36px; border-radius: 8px; background: #c2c2c2; }
.collapse { width: 38px; background: #e9e9e9; border: solid #c8c8c8; border-width: 0 2px; padding: 696px 0 0 11px; }

.side { flex: 1; background: #fbfbfb; color: #4b4b4b; font-size: 26px; letter-spacing: -0.600px; display: flex; flex-direction: column; }
.search { width: 400px; height: 70px; flex: none; margin: 30px 0 30px 30px; border: 2px solid #c8c8c8; background: #fff; padding-left: 28px; line-height: 67px; font-size: 25px; letter-spacing: -0.400px; color: #959595; }
.sidemain { display: flex; height: 920px; flex: none; }
.sidecol { width: 430px; height: 920px; overflow: hidden; display: flex; flex-direction: column; }
.exphead { height: 82px; flex: none; border-bottom: 2px solid #d2d2d2; display: flex; align-items: center; padding: 0 0 0 54px; font-size: 30px; }
.exphead span { width: 240px; margin: 2px 0 0 18px; }
.exptitle { display: flex; height: 34px; margin: 45px 0 0 30px; align-items: center; font-size: 27px; letter-spacing: 0.450px; }
.exptitle b { width: 339px; }
.expdesc { margin: 18px 0 0 30px; line-height: 35px; height: 70px; }
.d1 { letter-spacing: -0.500px; }
.filebox, .select { margin-left: 30px; width: 370px; height: 60px; flex: none; border: 2px solid #dedede; border-radius: 7px; display: flex; align-items: center; padding-left: 18px; letter-spacing: -0.780px; }
.filebox { margin-top: 79px; }
.filebox span { width: 311px; }
.convlabel { margin: 36px 0 8px 30px; height: 36px; line-height: 32px; }
.select { width: 374px; }
.select span { width: 306px; }
.lang { margin: 26px 0 0 30px; line-height: 38px; }
.lang a { color: #0265bd; margin-left: 14px; font-weight: 500; }
.convert { width: 370px; height: 64px; flex: none; margin: 116px 0 0 30px; border-radius: 32px; background: #2680eb; color: #fff; text-align: center; font-size: 29px; line-height: 64px; }
.sideline { border-top: 2px solid #d2d2d2; margin-top: 84px; }
.sscroll { flex: 1; border-left: 2px solid #e4e4e4; border-right: 1px solid #e4e4e4; padding: 6px 0 0 6px; }
.sscroll i { display: block; width: 16px; height: 427px; border-radius: 8px; background: #c2c2c2; }
.promo { flex: 1; border-top: 2px solid #c8c8c8; display: flex; flex-direction: column; align-items: center; padding: 73px 0 0 0; line-height: 38px; font-size: 25px; }
.trial { width: 300px; height: 80px; margin-top: 74px; border-radius: 40px; background: #3b7de0; color: #fff; text-align: center; line-height: 82px; font-size: 24px; font-weight: 500; }
.talking { position: absolute; left: 2392px; top: 580px; width: 500px; height: 80px; background: #333f4b; color: #fff; font-size: 24px; line-height: 87px; padding-left: 44px; font-weight: 500; letter-spacing: -0.400px; box-shadow: 0 6px 30px rgba(0,0,0,.45); }

/* dock */
.dock { width: 2727px; height: 112px; margin: 16px 0 0 76px; background: #4c4b4c; border-radius: 10px 10px 0 0; display: flex; padding: 11px 0 0 6px; }
.defs { position: absolute; }
.di { position: relative; width: 94px; display: flex; flex-direction: column; align-items: center; }
.di > svg { width: 84px; height: 84px; overflow: visible; }
.on::after { content: ""; width: 8px; height: 8px; border-radius: 50%; background: #000; margin-top: 5px; }
.di em { position: absolute; right: 4px; top: -3px; min-width: 34px; height: 34px; border-radius: 17px; background: #e9503f; color: #fff; font: 24px/34px Inter, sans-serif; text-align: center; letter-spacing: -1px; }
.di em.w3 { min-width: 42px; right: 2px; font-size: 22px; }
.dsep { width: 42px; height: 84px; flex: none; background: linear-gradient(#222, #222) 20px 0 / 2px 84px no-repeat; }
```
